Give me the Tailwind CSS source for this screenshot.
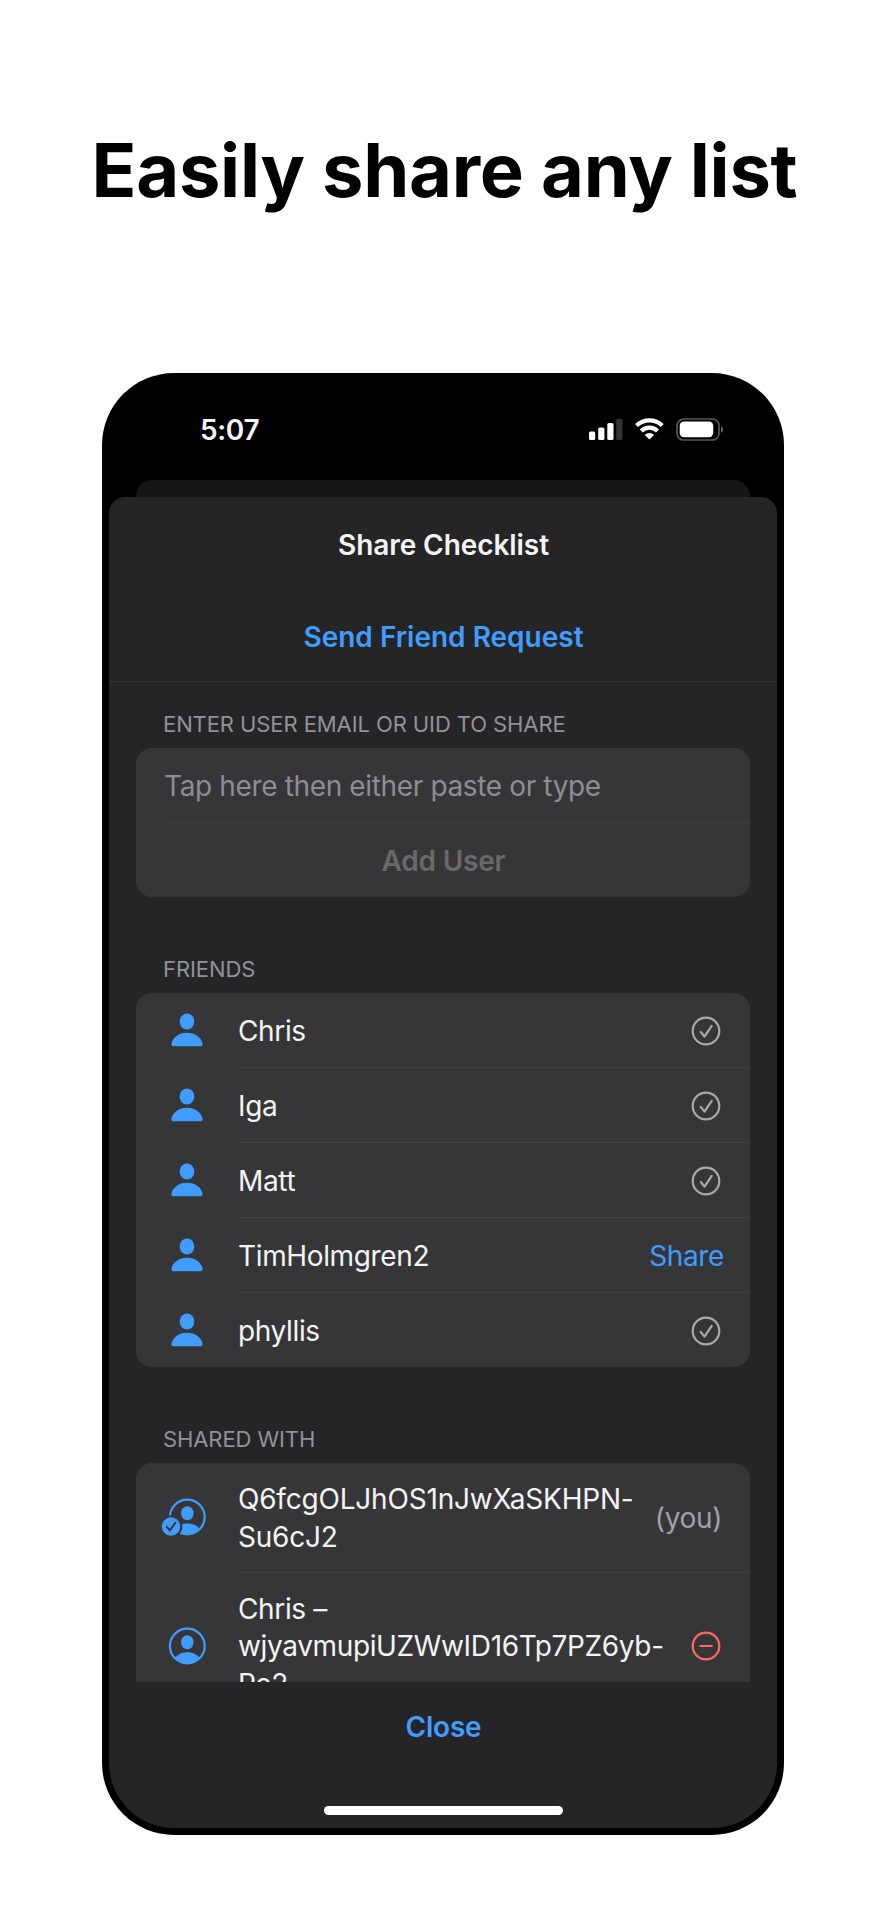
<!DOCTYPE html>
<html lang="en">
<head>
<meta charset="utf-8">
<title>Easily share any list</title>
<script src="https://cdn.jsdelivr.net/npm/@tailwindcss/browser@4"></script>
</head>
<body class="bg-white font-['Inter',sans-serif] overflow-hidden">
<svg class="hidden">
  <symbol id="person" viewBox="0 0 36 36"><ellipse cx="18" cy="9.5" rx="7.3" ry="8" fill="#409cff"/><path d="M5 34.3C3.3 34.3 2.5 33.6 2.5 32.2C2.5 27.5 8.4 20.8 18 20.8S33.500 27.500 33.500 32.200C33.500 33.600 32.700 34.300 31 34.300Z" fill="#409cff"/></symbol>
  <symbol id="check" viewBox="0 0 30 30"><g fill="none" stroke="#a9a9ab" stroke-width="2.2" stroke-linecap="round" stroke-linejoin="round"><circle cx="15" cy="15" r="13.300"/><path d="M9.700 15.900L13.500 20.600L20.700 9.900"/></g></symbol>
</svg>
<main class="w-[886px] h-[1920px] flex flex-col items-center">
  <h1 class="h-[373px] pt-[125px] pl-[3px] text-[74px] leading-[90px] font-bold text-black whitespace-nowrap tracking-[-0.25px]">Easily share any list</h1>
  <div class="w-[682px] h-[1462px] bg-black rounded-[72px] p-[7px]">
    <div class="h-full rounded-[65px] overflow-hidden flex flex-col text-[28px] tracking-[-0.36px] text-[#f4f4f4]">
      <div class="h-[100px] shrink-0 flex items-center pl-[91px] pr-[54px]">
        <span class="font-semibold">5:07</span>
        <svg class="ml-auto w-[134px] h-[24px]" viewBox="0 0 134 24">
          <g fill="#fff"><rect x="0" y="13.500" width="6.200" height="8.500" rx="1.600"/><rect x="9.200" y="9.600" width="6.200" height="12.400" rx="1.600"/><rect x="18.300" y="5" width="6.200" height="17" rx="1.600"/></g>
          <rect x="27.200" y="0.800" width="6.200" height="21.200" rx="1.600" fill="#333"/>
          <g fill="none" stroke="#fff" stroke-width="4.200"><path d="M47.500 7.600A18.500 18.500 0 0 1 73.300 7.600"/><path d="M52.300 12.900A11.500 11.500 0 0 1 68.500 12.900"/></g>
          <path d="M60.400 21.600L55.700 17A6.700 6.700 0 0 1 65.100 17Z" fill="#fff"/>
          <rect x="88" y="1" width="42" height="21" rx="6.600" fill="none" stroke="#565656" stroke-width="1.700"/>
          <rect x="90.700" y="3.600" width="33.500" height="15.700" rx="4.200" fill="#fff"/>
          <path d="M132 8.300C134.700 9.500 134.700 13.500 132 14.700Z" fill="#666"/>
        </svg>
      </div>
      <div class="h-[17px] shrink-0 mx-[27px] bg-[#161616] rounded-t-[16px]"></div>
      <section class="flex-1 bg-[#252527] rounded-t-[16px] flex flex-col">
        <h2 class="h-[95px] pl-px flex items-center justify-center font-semibold tracking-[-0.07px]">Share Checklist</h2>
        <div class="h-[90px] pl-px flex items-center justify-center font-semibold tracking-normal text-[#409cff] border-b border-[#323235]">Send Friend Request</div>
        <div class="h-[1000px] overflow-hidden px-[27px]">
          <h3 class="h-[66px] pl-[27px] pt-[29px] text-[22px] leading-[26px] tracking-[-0.09px] text-[#929298]">ENTER USER EMAIL OR UID TO SHARE</h3>
          <div class="h-[149px] rounded-[16px] bg-[#363638] flex flex-col">
            <div class="ml-[27px] pl-px h-[75px] pt-[2px] border-b border-[#3e3e40] flex items-center text-[#8d8d93]">Tap here then either paste or type</div>
            <div class="h-[74px] pl-px pt-[2px] flex items-center justify-center font-semibold tracking-[-0.2px] text-[#69696b]">Add User</div>
          </div>
          <h3 class="h-[96px] pl-[27px] pt-[59px] text-[22px] leading-[26px] tracking-[-0.09px] text-[#929298]">FRIENDS</h3>
          <ul class="h-[374px] rounded-[16px] bg-[#363638]">
            <li class="h-[75px] flex pl-[33px]"><svg class="w-[36px] h-[36px] mt-[19px] mr-[33px]"><use href="#person"/></svg><div class="flex-1 pt-[2px] border-b border-[#404042] flex items-center justify-between pr-[29px]"><span>Chris</span><svg class="w-[30px] h-[30px]"><use href="#check"/></svg></div></li>
            <li class="h-[75px] flex pl-[33px]"><svg class="w-[36px] h-[36px] mt-[19px] mr-[33px]"><use href="#person"/></svg><div class="flex-1 pt-[2px] border-b border-[#404042] flex items-center justify-between pr-[29px]"><span>Iga</span><svg class="w-[30px] h-[30px]"><use href="#check"/></svg></div></li>
            <li class="h-[75px] flex pl-[33px]"><svg class="w-[36px] h-[36px] mt-[19px] mr-[33px]"><use href="#person"/></svg><div class="flex-1 pt-[2px] border-b border-[#404042] flex items-center justify-between pr-[29px]"><span>Matt</span><svg class="w-[30px] h-[30px]"><use href="#check"/></svg></div></li>
            <li class="h-[75px] flex pl-[33px]"><svg class="w-[36px] h-[36px] mt-[19px] mr-[33px]"><use href="#person"/></svg><div class="flex-1 pt-[2px] border-b border-[#404042] flex items-center justify-between pr-[26px]"><span>TimHolmgren2</span><span class="text-[#409cff]">Share</span></div></li>
            <li class="h-[74px] flex pl-[33px]"><svg class="w-[36px] h-[36px] mt-[19px] mr-[33px]"><use href="#person"/></svg><div class="flex-1 pt-[2px] flex items-center justify-between pr-[29px]"><span>phyllis</span><svg class="w-[30px] h-[30px]"><use href="#check"/></svg></div></li>
          </ul>
          <h3 class="h-[96px] pl-[27px] pt-[59px] text-[22px] leading-[26px] tracking-[-0.09px] text-[#929298]">SHARED WITH</h3>
          <ul class="rounded-t-[16px] bg-[#363638] leading-[37.5px]">
            <li class="h-[110px] flex pl-[25px]">
              <svg class="w-[46px] h-[40px] mt-[34px] mr-[31px]" viewBox="0 0 46 40" fill="#409cff">
                <clipPath id="disc"><circle cx="26.300" cy="20" r="17.500"/></clipPath>
                <circle cx="26.300" cy="20" r="17.400" fill="none" stroke="#409cff" stroke-width="2.200"/>
                <ellipse cx="26.300" cy="16.300" rx="6.200" ry="7"/><ellipse cx="26.300" cy="38" rx="14.500" ry="11.800" clip-path="url(#disc)"/>
                <circle cx="10" cy="29.500" r="11.300" fill="#363638"/><circle cx="10" cy="29.500" r="9.200"/>
                <path d="M5.800 30L8.900 33.400L14.300 25.700" fill="none" stroke="#363638" stroke-width="2" stroke-linecap="round" stroke-linejoin="round"/>
              </svg>
              <div class="flex-1 pt-[2px] border-b border-[#404042] flex items-center justify-between pr-[28px]"><p class="tracking-[-0.2px]">Q6fcgOLJhOS1nJwXaSKHPN-<br>Su6cJ2</p><span class="text-[#a0a0a6]">(you)</span></div>
            </li>
            <li class="h-[147px] flex pl-[25px]">
              <svg class="w-[46px] h-[40px] mt-[53px] mr-[31px]" viewBox="0 0 46 40" fill="#409cff">
                <circle cx="26.300" cy="20" r="17.400" fill="none" stroke="#409cff" stroke-width="2.200"/>
                <ellipse cx="26.300" cy="16.300" rx="6.200" ry="7"/><ellipse cx="26.300" cy="38" rx="14.500" ry="11.800" clip-path="url(#disc)"/>
              </svg>
              <div class="flex-1 flex items-center justify-between pr-[29px]"><p class="whitespace-nowrap pt-px">Chris –<br>wjyavmupiUZWwID16Tp7PZ6yb-<br>Pe2</p>
              <svg class="w-[30px] h-[30px] mb-px shrink-0" viewBox="0 0 30 30" fill="none" stroke="#ff6961" stroke-width="2.200" stroke-linecap="round"><circle cx="15" cy="15" r="13.300"/><path d="M9.300 15H20.700"/></svg></div>
            </li>
          </ul>
        </div>
        <div class="h-[89px] pl-px flex items-center justify-center font-semibold tracking-[-0.2px] text-[#409cff]">Close</div>
        <div class="mt-[35px] w-[239px] h-[9px] rounded-full bg-white self-center"></div>
      </section>
    </div>
  </div>
</main>
</body>
</html>
